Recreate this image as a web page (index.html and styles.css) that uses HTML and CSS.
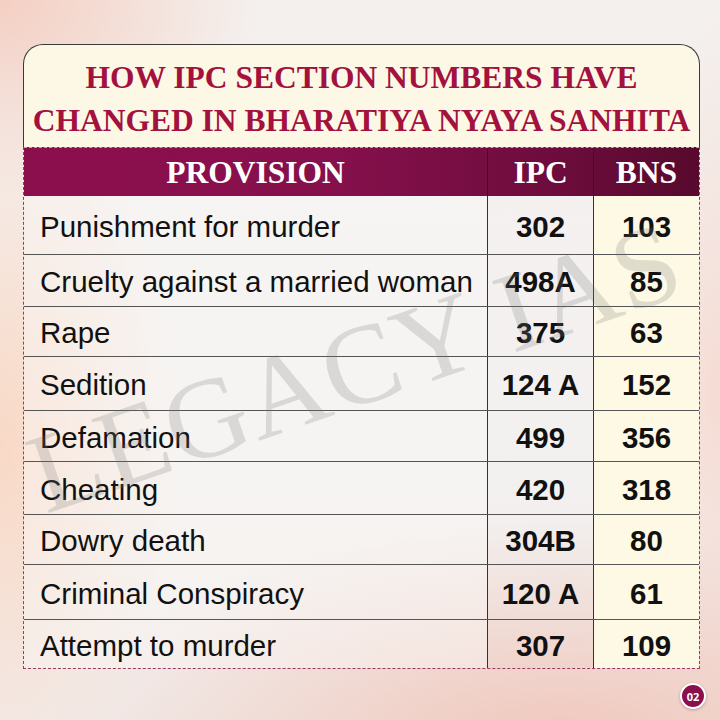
FILE: index.html
```html
<!DOCTYPE html>
<html lang="en">
<head>
<meta charset="utf-8">
<title>IPC vs BNS</title>
<link rel="stylesheet" href="styles.css">
</head>
<body>
<div class="page">
  <div class="card">
    <div class="title-box">
      <h1 class="title">HOW IPC SECTION NUMBERS HAVE<br>CHANGED IN BHARATIYA NYAYA SANHITA</h1>
    </div>
    <div class="table">
      <div class="row head">
        <div class="cell">PROVISION</div>
        <div class="cell">IPC</div>
        <div class="cell">BNS</div>
      </div>
      <div class="body">
        <div class="row"><div class="cell prov">Punishment for murder</div><div class="cell num">302</div><div class="cell num bns">103</div></div>
        <div class="row"><div class="cell prov">Cruelty against a married woman</div><div class="cell num">498A</div><div class="cell num bns">85</div></div>
        <div class="row"><div class="cell prov">Rape</div><div class="cell num">375</div><div class="cell num bns">63</div></div>
        <div class="row"><div class="cell prov">Sedition</div><div class="cell num">124 A</div><div class="cell num bns">152</div></div>
        <div class="row"><div class="cell prov">Defamation</div><div class="cell num">499</div><div class="cell num bns">356</div></div>
        <div class="row"><div class="cell prov">Cheating</div><div class="cell num">420</div><div class="cell num bns">318</div></div>
        <div class="row"><div class="cell prov">Dowry death</div><div class="cell num">304B</div><div class="cell num bns">80</div></div>
        <div class="row"><div class="cell prov">Criminal Conspiracy</div><div class="cell num">120 A</div><div class="cell num bns">61</div></div>
        <div class="row"><div class="cell prov">Attempt to murder</div><div class="cell num">307</div><div class="cell num bns">109</div></div>
      </div>
    </div>
  </div>
</div>
<div class="watermark">LEGACY IAS</div>
<div class="badge">02</div>
</body>
</html>
```

FILE: styles.css
```css
html, body {
  margin: 0;
  padding: 0;
}
body {
  width: 720px;
  height: 720px;
  overflow: hidden;
  position: relative;
  font-family: "Liberation Sans", Arial, sans-serif;
  background:
    radial-gradient(ellipse 260px 200px at 0% 0%, rgba(244, 196, 180, 0.75), rgba(244, 196, 180, 0) 100%),
    radial-gradient(ellipse 180px 360px at 0% 62%, rgba(250, 212, 190, 0.85), rgba(250, 212, 190, 0) 100%),
    radial-gradient(ellipse 520px 230px at 78% 104%, rgba(240, 196, 184, 0.95), rgba(240, 196, 184, 0) 100%),
    radial-gradient(ellipse 90px 380px at 100% 55%, rgba(246, 214, 204, 0.8), rgba(246, 214, 204, 0) 100%),
    linear-gradient(180deg, #f4f0ee 0%, #f3f1f0 60%, #f1ecea 100%);
}
.page {
  padding: 44px 0 0 23px;
}
.card {
  width: 677px;
}
.title-box {
  height: 103px;
  box-sizing: border-box;
  border: 1.5px solid #3a3a3a;
  border-bottom: none;
  border-radius: 20px 20px 0 0;
  background: #fdf8e5;
  display: flex;
  align-items: center;
  justify-content: center;
  padding-top: 5px;
}
.title {
  margin: 0;
  font-family: "Liberation Serif", "Times New Roman", serif;
  font-weight: bold;
  font-size: 31.5px;
  line-height: 43px;
  color: #a3113e;
  text-align: center;
  white-space: nowrap;
}
.table {
  border-left: 1px dashed #9a3a63;
  border-right: 1px dashed #9a3a63;
  border-bottom: 1.5px dashed #9a3a63;
  box-sizing: border-box;
}
.row {
  display: grid;
  grid-template-columns: 463px 106px 1fr;
}
.head {
  height: 49px;
  box-sizing: border-box;
  border-top: 1px dashed #d898b0;
  background: linear-gradient(90deg, #8c0f4d 0%, #86104c 45%, #6e0c3d 78%, #570a2d 100%);
}
.head .cell {
  font-family: "Liberation Serif", "Times New Roman", serif;
  font-weight: bold;
  font-size: 31.5px;
  color: #ffffff;
  display: flex;
  align-items: center;
  justify-content: center;
  padding-top: 2px;
}
.head .cell + .cell {
  border-left: 1px solid #2b1a20;
}
.body .row {
  border-top: 1.5px solid #555;
  box-sizing: border-box;
}
.body .row:first-child { border-top: none; height: 58px; }
.body .row:nth-child(2) { height: 52px; }
.body .row:nth-child(3) { height: 50px; }
.body .row:nth-child(4) { height: 54px; }
.body .row:nth-child(5) { height: 51px; }
.body .row:nth-child(6) { height: 53px; }
.body .row:nth-child(7) { height: 50px; }
.body .row:nth-child(8) { height: 55px; }
.body .row:nth-child(9) { height: 49px; }
.cell {
  display: flex;
  align-items: center;
  font-size: 29.5px;
  color: #111;
}
.prov {
  padding-left: 16px;
  background: rgba(250, 248, 247, 0.45);
  padding-top: 3px;
}
.num {
  justify-content: center;
  font-weight: bold;
  border-left: 1px solid #333;
  padding-top: 3px;
}
.bns {
  background: #fdf9e4;
}
.watermark {
  position: absolute;
  left: 52px;
  top: 418px;
  font-family: "Liberation Serif", "Times New Roman", serif;
  font-size: 114px;
  color: rgba(120, 120, 120, 0.22);
  white-space: nowrap;
  transform-origin: 0 100%;
  transform: rotate(-19deg);
  letter-spacing: 1px;
  pointer-events: none;
  line-height: 1;
}
.badge {
  position: absolute;
  left: 680px;
  top: 683px;
  width: 22px;
  height: 22px;
  border-radius: 50%;
  background: #8b0f4c;
  border: 2px solid #fff;
  color: #fff;
  font-family: "Open Sans", "Liberation Sans", sans-serif;
  font-weight: bold;
  font-size: 11px;
  display: flex;
  align-items: center;
  justify-content: center;
  box-shadow: 0 1px 3px rgba(0, 0, 0, 0.25);
}
```
